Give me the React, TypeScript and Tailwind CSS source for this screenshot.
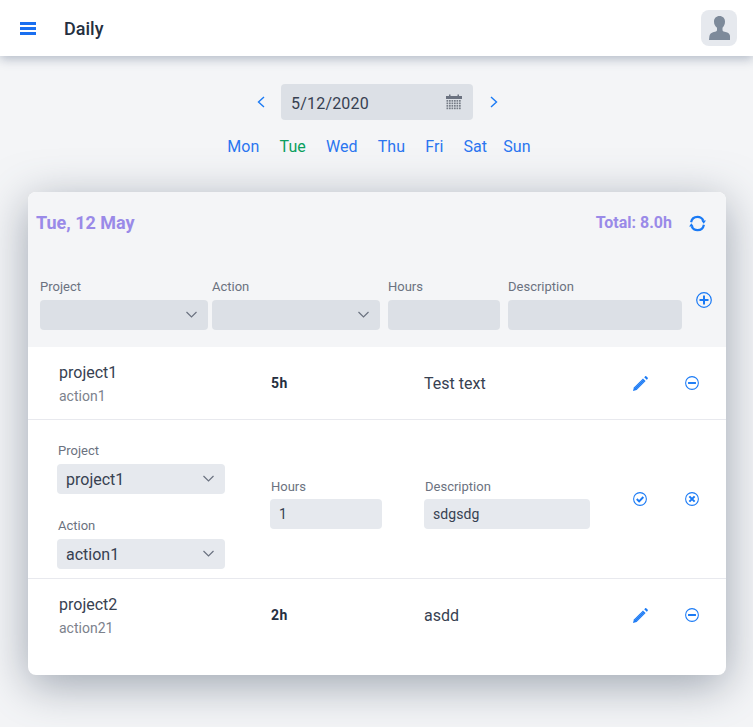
import React, { FC } from "react";

/* ICONS */
const MenuIcon = () => (
  <svg width="16" height="13" viewBox="0 0 16 13" fill="#1a6ff0">
    <rect y="0" width="16" height="3" />
    <rect y="5" width="16" height="3" />
    <rect y="10" width="16" height="3" />
  </svg>
);

const PersonIcon = () => (
  <svg width="21" height="24" viewBox="0 0 21 24" fill="#7d8a9a">
    <path d="M10.500 0c3.300 0 5.500 2.400 5.500 5.600 0 2.600-1 4.900-2.500 6.200v2.200c0 .7.400 1.200 1.100 1.400l2.900.9c2.200.7 3.300 2 3.600 4l.4 3.700H0l.4-3.700c.3-2 1.400-3.300 3.600-4l2.900-.9c.7-.2 1.100-.7 1.100-1.400v-2.200C6 10.500 5 8.200 5 5.600 5 2.400 7.200 0 10.500 0z" />
  </svg>
);

const CalendarIcon = () => (
  <svg width="16" height="17" viewBox="0 0 16 17">
    <rect x="0" y="2" width="16" height="3" fill="#6b7280" />
    <rect x="3" y="0.500" width="1.500" height="2" fill="#6b7280" />
    <rect x="11.500" y="0.500" width="1.500" height="2" fill="#6b7280" />
    {[6, 8.500, 11, 13.500].map((y) =>
      [0.500, 3, 5.500, 8, 10.500, 13].map((x) => (
        <rect key={`${x}-${y}`} x={x} y={y} width="1.700" height="1.700" fill="#767c86" />
      ))
    )}
  </svg>
);

const Chevron: FC<{ dir: "left" | "right" }> = ({ dir }) => (
  <svg width="8" height="12" viewBox="0 0 8 12" fill="none" stroke="#1a7af5" strokeWidth="1.400">
    <path d={dir === "left" ? "M7 1 1.500 6 7 11" : "M1 1 6.500 6 1 11"} />
  </svg>
);

const SelectArrow = () => (
  <svg width="11" height="7" viewBox="0 0 11 7" fill="none" stroke="#6b7280" strokeWidth="1.200">
    <path d="M.5 1l5 5 5-5" />
  </svg>
);

const RefreshIcon = () => (
  <svg width="17" height="17" viewBox="0 0 17 17" fill="none" stroke="#1a7af5" strokeWidth="2.200">
    <path d="M2.100 7.200C2.700 4 5.300 1.800 8.500 1.800c2.600 0 4.800 1.500 5.900 3.900" />
    <path d="M14.900 9.800c-.6 3.200-3.200 5.400-6.400 5.400-2.600 0-4.800-1.500-5.900-3.900" />
    <path d="M12.300 5.500H17l-2.300 3.200zM.1 11.500h4.600L2.400 8.300z" fill="#1a7af5" stroke="none" />
  </svg>
);

const CircleIcon: FC<{ size?: number; children: React.ReactNode }> = ({ size = 14, children }) => (
  <svg width={size} height={size} viewBox="0 0 16 16" fill="none" stroke="#1a7af5" strokeWidth="1.200">
    <circle cx="8" cy="8" r="7.300" />
    {children}
  </svg>
);

const PlusIcon = () => (
  <CircleIcon size={16}>
    <path d="M3.500 8h9M8 3.500v9" strokeWidth="2" />
  </CircleIcon>
);
const MinusIcon = () => (
  <CircleIcon>
    <path d="M3.500 8h9" strokeWidth="2.200" />
  </CircleIcon>
);
const CheckIcon = () => (
  <CircleIcon>
    <path d="M4.300 8l2.700 2.700 4.800-5" strokeWidth="2.200" />
  </CircleIcon>
);
const CrossIcon = () => (
  <CircleIcon>
    <path d="M5 5l6 6M11 5l-6 6" strokeWidth="2.400" />
  </CircleIcon>
);

const PencilIcon = () => (
  <svg width="15" height="15" viewBox="0 0 15 15" fill="#1a7af5">
    <path d="M0 15l.9-3.600L10 2.400l2.600 2.600-9 9.100z" />
    <path d="M1.500 12.400 10.600 3.400M3 13.300l8.600-8.700" stroke="#8fbcf8" strokeWidth="0.400" />
    <path d="M11.200 1.300l.9-.9c.4-.4.900-.4 1.300 0l1.200 1.200c.4.400.4.900 0 1.300l-.9.900z" />
  </svg>
);

/* COMPONENTS */
const days = ["Mon", "Tue", "Wed", "Thu", "Fri", "Sat"];

const FieldLabel: FC<{ children: string; className?: string }> = ({ children, className = "" }) => (
  <label className={`block text-[13px] leading-4 text-[#6b7280] ${className}`}>{children}</label>
);

const SelectBox: FC<{ value?: string; dark?: boolean }> = ({ value, dark }) => (
  <div className="relative w-[168px]">
    <select
      defaultValue={value}
      className={`block h-[30px] w-full appearance-none rounded pl-[9px] pr-8 pt-[2px] text-base text-[#374151] outline-none ${
        dark ? "bg-[#dce0e6]" : "bg-[#e6e9ee]"
      }`}
    >
      {value && <option>{value}</option>}
    </select>
    <span className="pointer-events-none absolute right-[11px] top-[11px] flex">
      <SelectArrow />
    </span>
  </div>
);

const TextBox: FC<{ value?: string; dark?: boolean; className: string }> = ({ value, dark, className }) => (
  <input
    readOnly
    value={value ?? ""}
    className={`block h-[30px] rounded px-[9px] text-sm tracking-[0.1px] text-[#374151] outline-none ${
      dark ? "bg-[#dce0e6]" : "bg-[#e6e9ee]"
    } ${className}`}
  />
);

const EntryRow: FC<{ project: string; action: string; hours: string; text: string; className: string }> = ({
  project,
  action,
  hours,
  text,
  className,
}) => (
  <div className={`flex items-center ${className}`}>
    <div className="w-[242px] pb-px pl-[31px] pt-[2px]">
      <div className="text-base leading-5 text-[#374151]">{project}</div>
      <div className="mt-1 text-sm leading-[18px] text-[#7c828c]">{action}</div>
    </div>
    <div className="w-[154px] pl-px text-sm font-bold tracking-[0.5px] text-[#252f3f]">{hours}</div>
    <div className="w-[209px] pt-[2px] text-base text-[#374151]">{text}</div>
    <div className="flex w-[52px] shrink-0">
      <PencilIcon />
    </div>
    <MinusIcon />
  </div>
);

export default function App() {
  return (
    <div
      className="min-h-screen bg-[#f4f5f7] text-[#374151]"
      style={{ fontFamily: "Roboto, sans-serif" }}
    >
      <header className="flex h-14 items-center justify-between bg-white pl-5 pr-4 shadow-[0_3px_10px_rgba(100,116,139,0.45)]">
        <div className="flex items-center">
          <MenuIcon />
          <h1 className="ml-7 pt-[2px] text-lg font-medium text-[#252f3f]">Daily</h1>
        </div>
        <div className="flex h-9 w-9 items-end justify-center rounded-lg bg-[#e6e9ee] pb-[6px]">
          <PersonIcon />
        </div>
      </header>

      <main className="pt-7">
        <div className="flex items-center justify-center pl-[2px]">
          <button className="mr-4 flex">
            <Chevron dir="left" />
          </button>
          <div className="flex h-9 w-48 items-center justify-between rounded bg-[#dce0e6] pl-[10px] pr-[11px] text-base tracking-[0.2px] text-[#374151]">
            <span className="pt-[3px]">5/12/2020</span>
            <CalendarIcon />
          </div>
          <button className="ml-[17px] flex">
            <Chevron dir="right" />
          </button>
        </div>

        <nav className="mt-[15px] flex justify-center pl-[5px] text-base leading-6 tracking-[0.1px] text-[#2a75f0]">
          {days.map((d) => (
            <span key={d} className={`${d === "Tue" ? "text-[#0a9f5e]" : ""} ${d === "Sat" ? "mr-4" : "mr-5"}`}>
              {d}
            </span>
          ))}
          <span>Sun</span>
        </nav>

        <section className="ml-7 mt-[33px] h-[483px] w-[698px] overflow-hidden rounded-lg bg-white shadow-[0_10px_45px_rgba(71,85,105,0.5)]">
          <div className="h-[155px] bg-[#f4f5f7]">
            <div className="flex h-[62px] items-center justify-between pl-2 pr-5">
              <h2 className="text-lg font-bold text-[#9a8ae8]">Tue, 12 May</h2>
              <div className="flex items-center">
                <span className="text-base font-bold text-[#9a8ae8]">Total: 8.0h</span>
                <span className="ml-[17px] flex">
                  <RefreshIcon />
                </span>
              </div>
            </div>
            <div className="mt-[25px] flex items-end pl-3">
              <div>
                <FieldLabel className="mb-[5px]">Project</FieldLabel>
                <SelectBox dark />
              </div>
              <div className="ml-1">
                <FieldLabel className="mb-[5px]">Action</FieldLabel>
                <SelectBox dark />
              </div>
              <div className="ml-2">
                <FieldLabel className="mb-[5px]">Hours</FieldLabel>
                <TextBox dark className="w-[112px]" />
              </div>
              <div className="ml-2">
                <FieldLabel className="mb-[5px]">Description</FieldLabel>
                <TextBox dark className="w-[174px]" />
              </div>
              <div className="mb-[22px] ml-[14px] flex">
                <PlusIcon />
              </div>
            </div>
          </div>

          <EntryRow
            project="project1"
            action="action1"
            hours="5h"
            text="Test text"
            className="h-[73px] border-b border-[#e8e9ee]"
          />

          <div className="flex h-[159px] items-center border-b border-[#e8e9ee]">
            <div className="w-[242px] pl-[29px] pt-[13px]">
              <FieldLabel className="mb-[5px] pl-px">Project</FieldLabel>
              <SelectBox value="project1" />
              <FieldLabel className="mb-[5px] mt-6 pl-px">Action</FieldLabel>
              <SelectBox value="action1" />
            </div>
            <div className="w-[154px] pt-[9px]">
              <FieldLabel className="mb-[4px] pl-px">Hours</FieldLabel>
              <TextBox value="1" className="w-[112px]" />
            </div>
            <div className="w-[209px] pt-[9px]">
              <FieldLabel className="mb-[4px] pl-px">Description</FieldLabel>
              <TextBox value="sdgsdg" className="w-[166px]" />
            </div>
            <div className="flex w-[52px] shrink-0">
              <CheckIcon />
            </div>
            <CrossIcon />
          </div>

          <EntryRow project="project2" action="action21" hours="2h" text="asdd" className="h-[72px]" />
        </section>
      </main>
    </div>
  );
}
